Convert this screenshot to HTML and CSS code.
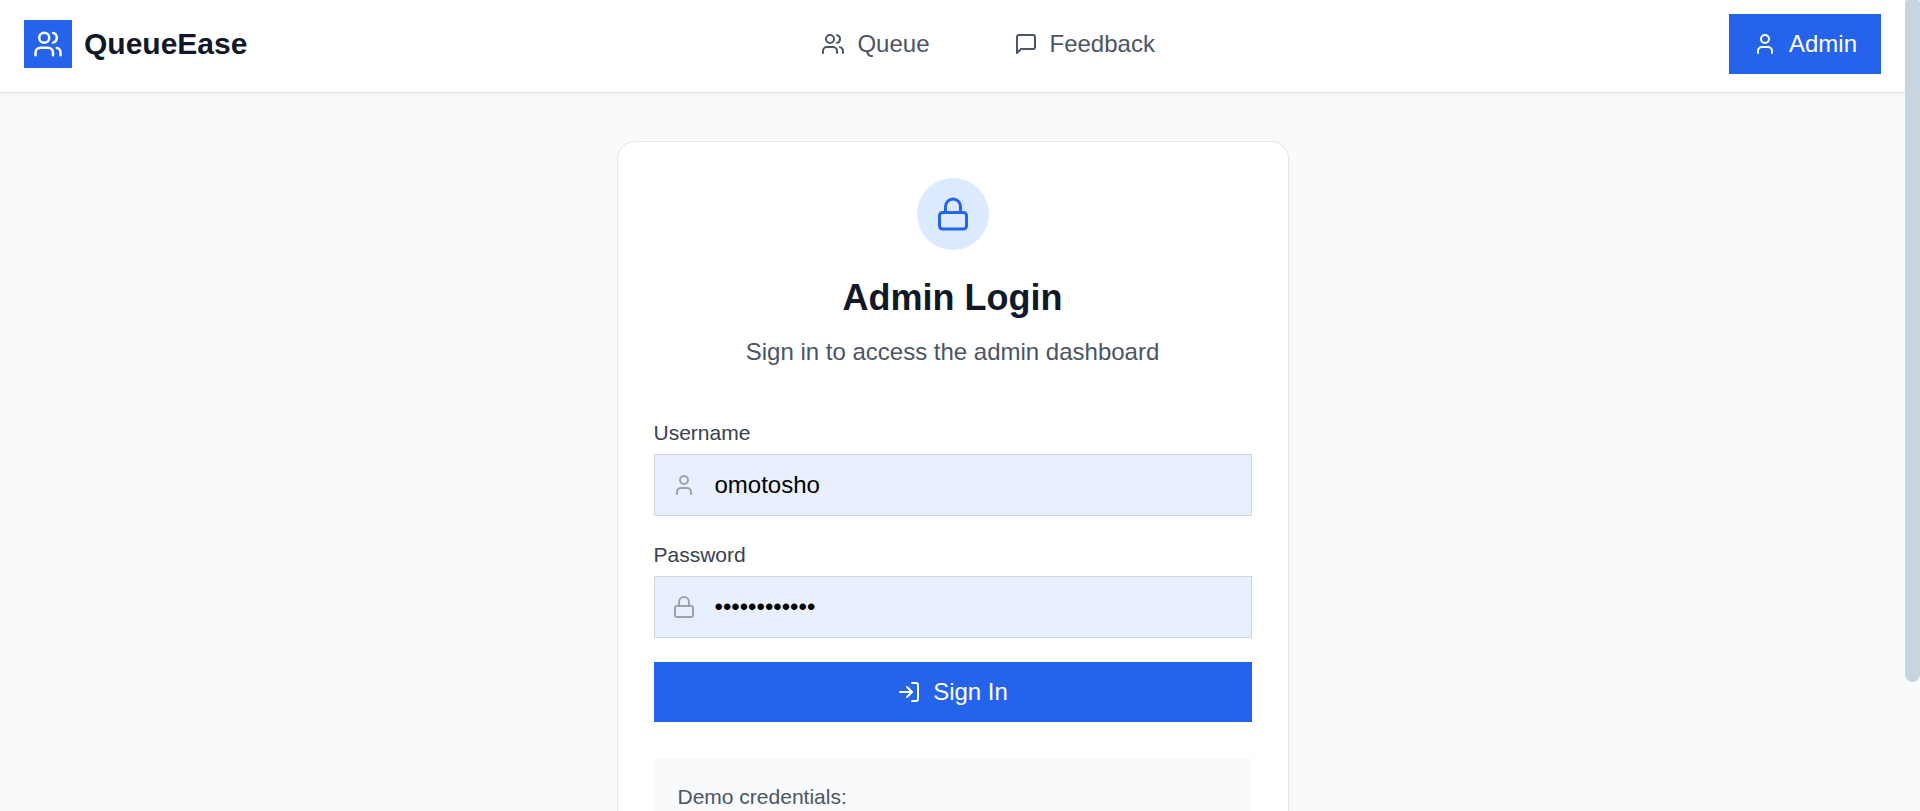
FILE: index.html
```html
<!DOCTYPE html>
<html lang="en">
<head>
<meta charset="utf-8">
<title>QueueEase - Admin Login</title>
<link rel="stylesheet" href="styles.css">
</head>
<body>
<svg class="sprite" aria-hidden="true">
  <symbol id="users" viewBox="0 0 24 24"><path d="M16 21v-2a4 4 0 0 0-4-4H6a4 4 0 0 0-4 4v2"/><circle cx="9" cy="7" r="4"/><path d="M22 21v-2a4 4 0 0 0-3-3.87"/><path d="M16 3.13a4 4 0 0 1 0 7.75"/></symbol>
  <symbol id="user" viewBox="0 0 24 24"><path d="M19 21v-2a4 4 0 0 0-4-4H9a4 4 0 0 0-4 4v2"/><circle cx="12" cy="7" r="4"/></symbol>
  <symbol id="message" viewBox="0 0 24 24"><path d="M21 15a2 2 0 0 1-2 2H7l-4 4V5a2 2 0 0 1 2-2h14a2 2 0 0 1 2 2z"/></symbol>
  <symbol id="lock" viewBox="0 0 24 24"><rect x="3" y="11" width="18" height="11" rx="2"/><path d="M7 11V7a5 5 0 0 1 10 0v4"/></symbol>
  <symbol id="log-in" viewBox="0 0 24 24"><path d="M15 3h4a2 2 0 0 1 2 2v14a2 2 0 0 1-2 2h-4"/><path d="M10 17l5-5-5-5"/><path d="M15 12H3"/></symbol>
</svg>
<div class="page">
  <header class="header">
    <a class="brand"><span class="brand-mark"><svg class="icon icon-md"><use href="#users"/></svg></span><span>QueueEase</span></a>
    <nav class="nav">
      <a class="nav-link"><svg class="icon"><use href="#users"/></svg>Queue</a>
      <a class="nav-link"><svg class="icon"><use href="#message"/></svg>Feedback</a>
    </nav>
    <a class="nav-link active"><svg class="icon"><use href="#user"/></svg>Admin</a>
  </header>
  <main class="main">
    <section class="card">
      <div class="badge"><svg class="icon icon-lg"><use href="#lock"/></svg></div>
      <h1 class="title">Admin Login</h1>
      <p class="subtitle">Sign in to access the admin dashboard</p>
      <form class="form">
        <div class="group">
          <label class="label" for="username">Username</label>
          <div class="field"><svg class="icon"><use href="#user"/></svg><input class="input" id="username" type="text" value="omotosho"></div>
        </div>
        <div class="group">
          <label class="label" for="password">Password</label>
          <div class="field"><svg class="icon"><use href="#lock"/></svg><input class="input" id="password" type="password" value="············"></div>
        </div>
        <button class="submit" type="button"><svg class="icon"><use href="#log-in"/></svg>Sign In</button>
      </form>
      <div class="demo">Demo credentials:</div>
    </section>
  </main>
</div>
<div class="scrollbar"><div class="thumb"></div></div>
</body>
</html>
```

FILE: styles.css
```css
* { box-sizing: border-box; }
body {
  margin: 0;
  height: 811px;
  display: flex;
  overflow: hidden;
  background: #f9fafb;
  color: #111827;
  font: 24px/36px "Liberation Sans", Arial, sans-serif;
}
.sprite { position: absolute; width: 0; height: 0; }
.page { flex: 1; background: #f9fafc; }
.icon {
  width: 24px;
  height: 24px;
  flex: none;
  fill: none;
  stroke: currentColor;
  stroke-width: 2;
  stroke-linecap: round;
  stroke-linejoin: round;
}
.icon-md { width: 30px; height: 30px; }
.icon-lg { width: 36px; height: 36px; }
.header {
  height: 93px;
  padding: 14px 24px 18px;
  display: flex;
  align-items: center;
  justify-content: space-between;
  background: #fff;
  border-bottom: 1px solid #e1e3e8;
  box-shadow: 0 1.5px 3px rgba(0, 0, 0, 0.04);
}
.brand { display: flex; align-items: center; gap: 12px; font-size: 30px; font-weight: 700; }
.brand-mark { display: flex; padding: 9px; background: #2563eb; color: #fff; }
.nav { display: flex; gap: 36px; }
.nav-link { display: flex; align-items: center; gap: 12px; padding: 12px 24px; color: #4b5563; }
.active { background: #2563eb; color: #fff; }
.main { display: flex; justify-content: center; padding-top: 48px; }
.card {
  width: 672px;
  height: 670px;
  padding: 36px 36px 0;
  background: #fff;
  border: 1px solid #e5e7eb;
  border-bottom: 0;
  border-radius: 18px 18px 0 0;
  box-shadow: 0 1.5px 3px rgba(0, 0, 0, 0.05);
}
.badge {
  width: 72px;
  height: 72px;
  margin: 0 auto;
  display: flex;
  align-items: center;
  justify-content: center;
  border-radius: 50%;
  background: #dbeafe;
  color: #2563eb;
}
.title { margin: 24px 0 12px; font-size: 36px; line-height: 48px; text-align: center; }
.subtitle { margin: 0; color: #4b5563; text-align: center; }
.form { margin-top: 48px; display: flex; flex-direction: column; gap: 24px; }
.label { display: block; height: 30px; margin-bottom: 6px; font-size: 21px; line-height: 30px; color: #374151; }
.field {
  height: 62px;
  padding-left: 17px;
  display: flex;
  align-items: center;
  gap: 19px;
  background: #e8f0fe;
  border: 1px solid #d1d5db;
  color: #9ca3af;
}
.input { flex: 1; min-width: 0; padding: 0; border: 0; outline: 0; background: none; color: #000; font: inherit; }
.submit {
  height: 60px;
  padding: 0;
  display: flex;
  align-items: center;
  justify-content: center;
  gap: 12px;
  border: 0;
  background: #2563eb;
  color: #fff;
  font: inherit;
}
.demo { height: 53px; margin-top: 36px; padding: 24px 24px 0; background: #f9fafc; color: #4b5563; font-size: 21px; line-height: 29px; }
.scrollbar { width: 15px; background: #f8fafc; }
.thumb { height: 682px; border-radius: 3px 3px 8px 8px; background: #c8d5de; }
```
